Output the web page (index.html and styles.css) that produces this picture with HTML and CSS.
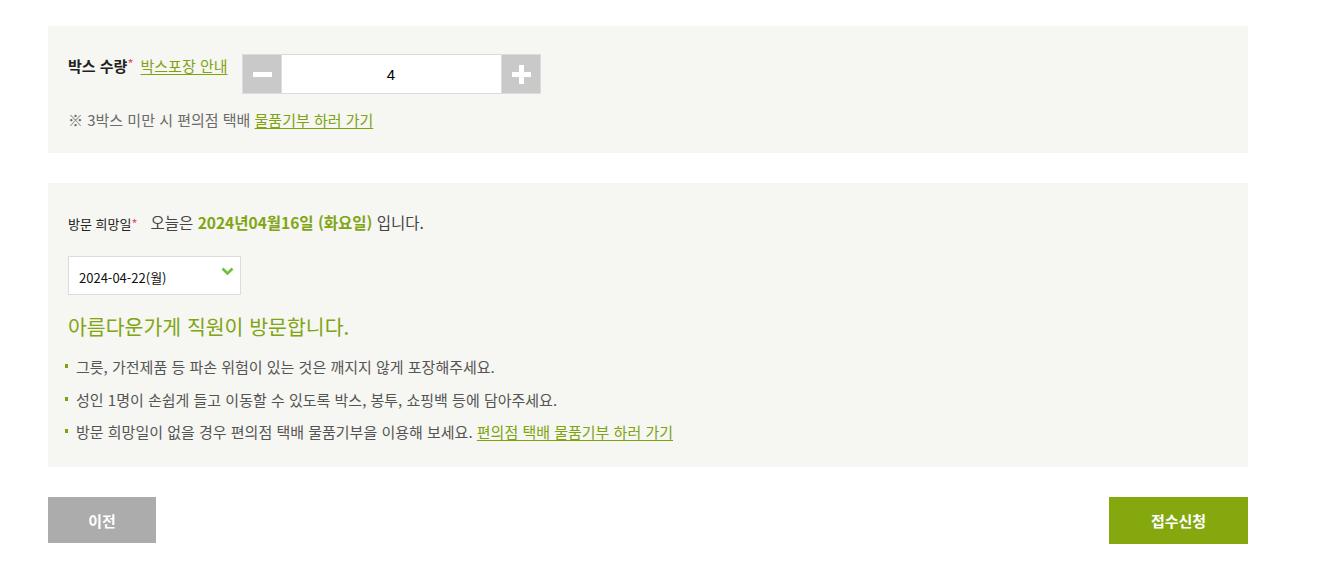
FILE: index.html
```html
<!DOCTYPE html>
<html lang="ko">
<head>
<meta charset="utf-8">
<title>물품기부 신청</title>
<link rel="stylesheet" href="styles.css">
</head>
<body>
<div class="wrap">
  <section class="panel panel-box">
    <div class="qty-row">
      <span class="label-strong">박스 수량<em class="req">*</em></span>
      <a class="link guide" href="#">박스포장 안내</a>
      <div class="stepper">
        <button class="step minus" type="button" aria-label="감소"><span class="bar-h"></span></button>
        <input class="qty" type="text" value="4">
        <button class="step plus" type="button" aria-label="증가"><span class="bar-h"></span><span class="bar-v"></span></button>
      </div>
    </div>
    <p class="note">※ 3박스 미만 시 편의점 택배 <a class="link" href="#">물품기부 하러 가기</a></p>
  </section>

  <section class="panel panel-visit">
    <div class="date-row">
      <span class="label-small">방문 희망일<em class="req">*</em></span>
      <span class="today">오늘은 <b class="green">2024년04월16일 (화요일)</b> 입니다.</span>
    </div>
    <div class="select">
      <span class="select-text">2024-04-22(월)</span>
      <svg class="chev" width="13" height="9" viewBox="0 0 13 9"><path d="M1.5 1.5 L6.5 6.5 L11.5 1.5" fill="none" stroke="#6cc03c" stroke-width="2.6"/></svg>
    </div>
    <h2 class="visit-title">아름다운가게 직원이 방문합니다.</h2>
    <ul class="bullets">
      <li>그릇, 가전제품 등 파손 위험이 있는 것은 깨지지 않게 포장해주세요.</li>
      <li>성인 1명이 손쉽게 들고 이동할 수 있도록 박스, 봉투, 쇼핑백 등에 담아주세요.</li>
      <li>방문 희망일이 없을 경우 편의점 택배 물품기부을 이용해 보세요. <a class="link" href="#">편의점 택배 물품기부 하러 가기</a></li>
    </ul>
  </section>

  <div class="actions">
    <button class="btn btn-prev" type="button">이전</button>
    <button class="btn btn-submit" type="button">접수신청</button>
  </div>
</div>
</body>
</html>
```

FILE: styles.css
```css
* { box-sizing: border-box; }
html, body {
  margin: 0;
  padding: 0;
  background: #fff;
}
body {
  font-family: "Noto Sans CJK KR", "Noto Sans", sans-serif;
  color: #333;
  font-size: 15px;
}
.wrap {
  width: 1200px;
  margin-left: 48px;
  padding-top: 26px;
}
.panel {
  background: #f6f6f2;
  padding-left: 20px;
  padding-right: 20px;
}
.panel-box {
  padding-top: 28px;
  padding-bottom: 23px;
}
.qty-row {
  display: flex;
  align-items: flex-start;
}
.label-strong {
  font-size: 15px;
  font-weight: bold;
  color: #222;
  line-height: 24px;
}
.req {
  font-style: normal;
  color: #e5506a;
  font-weight: normal;
  font-size: 13px;
  vertical-align: top;
  line-height: 20px;
}
.link {
  color: #7ea310;
  text-decoration: underline;
  text-underline-offset: 2px;
}
.guide {
  margin-left: 7px;
  font-size: 15px;
  line-height: 24px;
}
.stepper {
  display: flex;
  margin-left: 14px;
  height: 40px;
}
.step {
  width: 40px;
  height: 40px;
  padding: 0;
  border: 1px solid #dcdcdc;
  background: #c9c9c9;
  position: relative;
  cursor: pointer;
}
.bar-h {
  position: absolute;
  left: 10px;
  top: 17px;
  width: 19px;
  height: 5px;
  background: #fff;
}
.bar-v {
  position: absolute;
  left: 17px;
  top: 10px;
  width: 5px;
  height: 19px;
  background: #fff;
}
.qty {
  width: 219px;
  height: 40px;
  border: 1px solid #dcdcdc;
  border-left: 0;
  border-right: 0;
  text-align: center;
  font-family: "Liberation Sans", Arial, sans-serif;
  font-size: 15px;
  color: #000;
  padding: 0;
  margin: 0;
  background: #fff;
}
.note {
  margin: 16px 0 0;
  font-size: 15px;
  line-height: 20px;
  color: #6b6b6b;
}

.panel-visit {
  margin-top: 30px;
  padding-top: 29px;
  padding-bottom: 25px;
}
.date-row {
  display: flex;
  align-items: baseline;
  line-height: 20px;
}
.label-small {
  font-size: 13px;
  color: #222;
}
.today {
  margin-left: 13px;
  font-size: 15.5px;
  color: #444;
}
.green {
  color: #80a512;
  font-weight: bold;
}
.select {
  margin-top: 22px;
  width: 173px;
  height: 39px;
  background: #fff;
  border: 1px solid #dcdcdc;
  display: flex;
  align-items: center;
  justify-content: space-between;
  padding: 0 6px 0 10px;
}
.select-text {
  font-size: 13px;
  color: #111;
  padding-top: 3px;
}
.chev {
  margin-top: -8px;
}
.visit-title {
  margin: 17px 0 0;
  font-size: 20.5px;
  font-weight: normal;
  line-height: 28px;
  color: #80a512;
}
.bullets {
  list-style: none;
  margin: 17px 0 0;
  padding: 0;
  display: flex;
  flex-direction: column;
  gap: 12.5px;
}
.bullets li {
  position: relative;
  padding-left: 8px;
  font-size: 15px;
  line-height: 20px;
  color: #555;
}
.bullets li::before {
  content: "";
  position: absolute;
  left: -3px;
  top: 7px;
  width: 3px;
  height: 4px;
  background: #7ea310;
}

.actions {
  margin-top: 30px;
  display: flex;
  justify-content: space-between;
  align-items: flex-start;
}
.btn {
  border: 0;
  color: #fff;
  font-family: "Noto Sans CJK KR", sans-serif;
  font-size: 15px;
  font-weight: bold;
  cursor: pointer;
}
.btn-prev {
  width: 108px;
  height: 46px;
  background: #acacac;
}
.btn-submit {
  width: 139px;
  height: 47px;
  background: #84a80e;
}
```
